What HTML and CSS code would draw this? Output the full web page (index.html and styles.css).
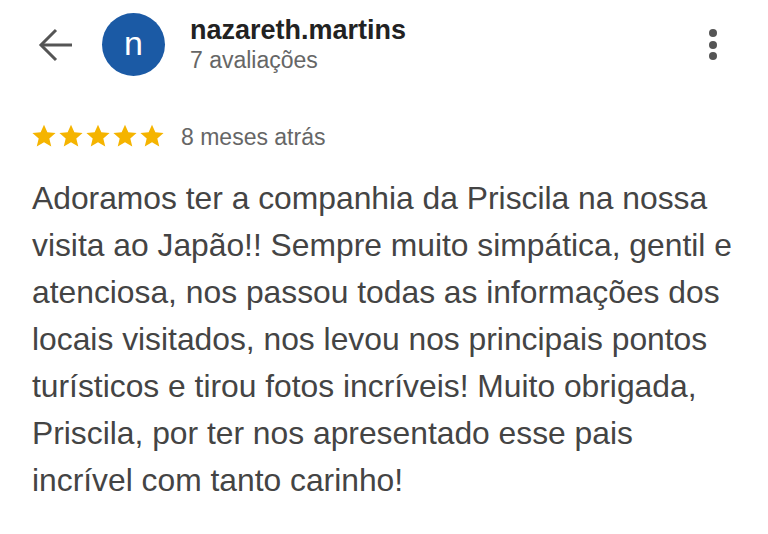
FILE: index.html
```
<!DOCTYPE html>
<html lang="pt-BR">
<head>
<meta charset="utf-8">
<title>Avaliação</title>
<link rel="stylesheet" href="styles.css">
</head>
<body>
<main class="review">
  <header class="top">
    <button class="back" aria-label="Voltar">
      <svg width="34" height="34" viewBox="0 0 34 34" fill="none" stroke="#555" stroke-width="3" stroke-linecap="butt" stroke-linejoin="miter">
        <path d="M3 17H34"/>
        <path d="M18 2L3 17L18 32"/>
      </svg>
    </button>
    <div class="avatar">n</div>
    <div class="who">
      <div class="name">nazareth.martins</div>
      <div class="count">7 avaliações</div>
    </div>
    <button class="menu" aria-label="Mais opções">
      <span class="dot"></span><span class="dot"></span><span class="dot"></span>
    </button>
  </header>

  <div class="rating">
    <div class="stars">
      <svg class="star" viewBox="0 0 24 24"><path d="M12 1.5l3.1 7.1 7.6.7-5.8 5 1.8 7.5L12 17.8l-6.7 4 1.8-7.5-5.8-5 7.6-.7z"/></svg>
      <svg class="star" viewBox="0 0 24 24"><path d="M12 1.5l3.1 7.1 7.6.7-5.8 5 1.8 7.5L12 17.8l-6.7 4 1.8-7.5-5.8-5 7.6-.7z"/></svg>
      <svg class="star" viewBox="0 0 24 24"><path d="M12 1.5l3.1 7.1 7.6.7-5.8 5 1.8 7.5L12 17.8l-6.7 4 1.8-7.5-5.8-5 7.6-.7z"/></svg>
      <svg class="star" viewBox="0 0 24 24"><path d="M12 1.5l3.1 7.1 7.6.7-5.8 5 1.8 7.5L12 17.8l-6.7 4 1.8-7.5-5.8-5 7.6-.7z"/></svg>
      <svg class="star" viewBox="0 0 24 24"><path d="M12 1.5l3.1 7.1 7.6.7-5.8 5 1.8 7.5L12 17.8l-6.7 4 1.8-7.5-5.8-5 7.6-.7z"/></svg>
    </div>
    <span class="time">8 meses atrás</span>
  </div>

  <p class="text">Adoramos ter a companhia da Priscila na nossa<br>visita ao Japão!! Sempre muito simpática, gentil e<br>atenciosa, nos passou todas as informações dos<br>locais visitados, nos levou nos principais pontos<br>turísticos e tirou fotos incríveis! Muito obrigada,<br>Priscila, por ter nos apresentado esse pais<br>incrível com tanto carinho!</p>
</main>
</body>
</html>
```
FILE: styles.css
```
html, body {
  margin: 0;
  padding: 0;
  background: #fff;
}

body {
  font-family: "Liberation Sans", Arial, sans-serif;
  color: #444;
}

.review {
  width: 768px;
  height: 534px;
  overflow: hidden;
}

.top {
  display: flex;
  align-items: center;
  padding: 13px 0 0 38px;
  height: 63px;
}

.back {
  border: 0;
  background: none;
  padding: 0;
  width: 34px;
  height: 34px;
  display: flex;
}

.avatar {
  width: 63px;
  height: 63px;
  border-radius: 50%;
  background: #1b5aa5;
  color: #fff;
  font-size: 34px;
  line-height: 60px;
  text-align: center;
  margin-left: 30px;
  flex: none;
}

.who {
  margin-left: 25px;
  display: flex;
  flex-direction: column;
}

.name {
  font-weight: bold;
  font-size: 27px;
  line-height: 30px;
  color: #222;
}

.count {
  font-size: 23px;
  line-height: 28px;
  color: #666;
  margin-top: 1px;
}

.menu {
  margin-left: auto;
  margin-right: 51px;
  border: 0;
  background: none;
  padding: 0;
  display: flex;
  flex-direction: column;
  gap: 3.5px;
}

.dot {
  width: 8px;
  height: 8px;
  border-radius: 50%;
  background: #555;
}

.rating {
  display: flex;
  align-items: center;
  padding-left: 31px;
  margin-top: 48px;
  height: 24px;
}

.stars {
  display: flex;
  gap: 1px;
}

.star {
  width: 26px;
  height: 26px;
  fill: #f5b400;
}

.time {
  margin-left: 16px;
  font-size: 23px;
  color: #666;
  position: relative;
  top: 1px;
}

.text {
  margin: 27px 0 0 32px;
  font-size: 31.8px;
  line-height: 47px;
  color: #444;
}
```
